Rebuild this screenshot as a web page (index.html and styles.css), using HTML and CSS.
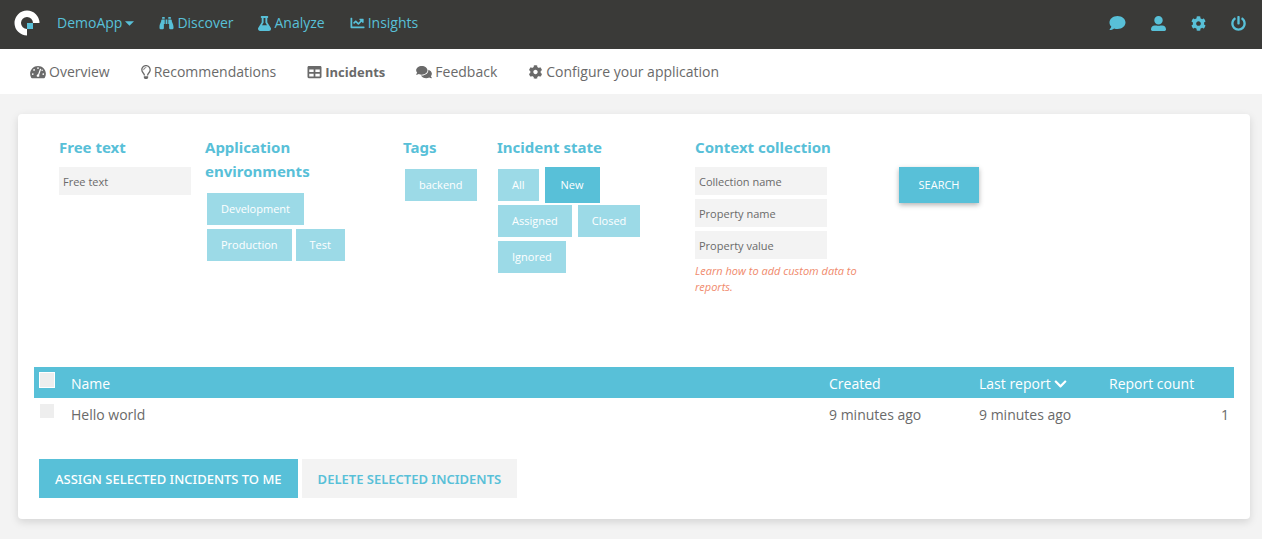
FILE: index.html
```html
<!DOCTYPE html>
<html lang="en">
<head>
<meta charset="utf-8">
<meta name="viewport" content="width=device-width, initial-scale=1">
<title>Incidents - DemoApp</title>
<link rel="stylesheet" href="styles.css">
</head>
<body>
<svg class="sprite" aria-hidden="true">
  <symbol id="cog" viewBox="0 0 512 512"><path d="M487.4 315.7l-42.6-24.6c4.3-23.2 4.3-47 0-70.2l42.6-24.6c4.9-2.8 7.1-8.6 5.5-14-11.1-35.6-30-67.8-54.7-94.6-3.8-4.1-10-5.1-14.8-2.3L380.8 110c-17.9-15.4-38.5-27.3-60.8-35.1V25.8c0-5.6-3.9-10.5-9.4-11.7-36.7-8.2-74.3-7.8-109.2 0-5.5 1.2-9.4 6.1-9.4 11.7V75c-22.2 7.9-42.8 19.8-60.8 35.1L88.7 85.5c-4.9-2.8-11-1.9-14.8 2.3-24.7 26.7-43.6 58.9-54.7 94.6-1.7 5.4.6 11.2 5.5 14L67.3 221c-4.3 23.2-4.3 47 0 70.2l-42.6 24.6c-4.9 2.8-7.1 8.6-5.5 14 11.1 35.6 30 67.8 54.7 94.6 3.8 4.1 10 5.1 14.8 2.3l42.6-24.6c17.9 15.4 38.5 27.3 60.8 35.1v49.2c0 5.6 3.9 10.5 9.4 11.7 36.7 8.2 74.3 7.8 109.2 0 5.5-1.2 9.4-6.1 9.4-11.7v-49.2c22.2-7.9 42.8-19.8 60.8-35.1l42.6 24.6c4.9 2.8 11 1.9 14.8-2.3 24.7-26.7 43.6-58.9 54.7-94.6 1.5-5.5-.7-11.3-5.6-14.1zM256 336c-44.1 0-80-35.9-80-80s35.9-80 80-80 80 35.9 80 80-35.9 80-80 80z"/></symbol>
</svg>
<header class="topbar">
  <a class="logo" href="#" aria-label="Home"><svg viewBox="0 0 26 26" width="26" height="26"><path fill="#fff" d="M13 25.500A12.500 12.500 0 1 1 25.500 13H19A6 6 0 1 0 13 19Z"/><path fill="#58c0d8" d="M13 13h6v6h-6z"/></svg></a>
  <nav class="topnav" aria-label="Main">
    <a href="#">DemoApp<svg class="caret" viewBox="0 0 8 4"><path d="M0 0h8L4 4z"/></svg></a>
    <a href="#"><svg class="icon" viewBox="0 0 512 512"><path d="M416 48c0-8.840-7.160-16-16-16h-64c-8.840 0-16 7.160-16 16v48h96V48zM63.910 159.990C61.400 253.840 3.460 274.220 0 404v44c0 17.670 14.330 32 32 32h96c17.670 0 32-14.330 32-32V288h32V128H95.840c-17.630 0-31.450 14.370-31.930 31.990zm384.180 0c-.48-17.620-14.300-31.990-31.930-31.990H320v160h32v160c0 17.670 14.330 32 32 32h96c17.670 0 32-14.330 32-32v-44c-3.460-129.780-61.400-150.160-63.910-244.010zM176 32h-64c-8.840 0-16 7.160-16 16v48h96V48c0-8.840-7.160-16-16-16zm48 256h64V128h-64v160z"/></svg>Discover</a>
    <a href="#"><svg class="icon tall" viewBox="0 0 448 512"><path d="M437.2 403.5L320 215V64h8c13.3 0 24-10.7 24-24V24c0-13.300-10.700-24-24-24H120c-13.300 0-24 10.700-24 24v16c0 13.300 10.700 24 24 24h8v151L10.800 403.500C-18.500 450.600 15.300 512 70.900 512h306.200c55.700 0 89.400-61.500 60.100-108.500zM137.900 320l48.200-77.600c3.700-5.200 5.800-11.600 5.800-18.400V64h64v160c0 6.900 2.200 13.200 5.800 18.400l48.200 77.600h-172z"/></svg>Analyze</a>
    <a href="#"><svg class="icon" viewBox="0 0 512 512"><path d="M496 384H64V80c0-8.840-7.160-16-16-16H16C7.160 64 0 71.160 0 80v336c0 17.670 14.330 32 32 32h464c8.840 0 16-7.160 16-16v-32c0-8.840-7.160-16-16-16zM464 96H345.940c-21.380 0-32.090 25.850-16.970 40.970l32.400 32.400L288 242.750l-73.370-73.370c-12.500-12.500-32.760-12.500-45.250 0l-68.690 68.690c-6.250 6.250-6.250 16.380 0 22.630l22.620 22.620c6.250 6.250 16.380 6.250 22.630 0L192 237.250l73.370 73.370c12.500 12.500 32.760 12.500 45.250 0l96-96 32.400 32.400c15.120 15.120 40.970 4.410 40.970-16.970V112c.01-8.840-7.150-16-15.990-16z"/></svg>Insights</a>
  </nav>
  <nav class="tools" aria-label="Account">
    <a href="#" aria-label="Messages"><svg viewBox="0 0 512 512" width="17" height="16"><path d="M256 32C114.600 32 0 125.100 0 240c0 49.600 21.400 95 57 130.700C44.500 421.100 2.700 466 2.200 466.500c-2.200 2.300-2.800 5.700-1.500 8.700S4.800 480 8 480c66.300 0 116-31.800 140.600-51.400 32.700 12.300 69 19.400 107.400 19.400 141.400 0 256-93.100 256-208S397.400 32 256 32z"/></svg></a>
    <a href="#" aria-label="Profile"><svg viewBox="0 0 512 512" width="15" height="15"><path d="M256 288c79.500 0 144-64.500 144-144S335.500 0 256 0 112 64.500 112 144s64.500 144 144 144zm128 32h-55.100c-22.200 10.200-46.900 16-72.900 16s-50.600-5.800-72.900-16H128C57.300 320 0 377.300 0 448v16c0 26.500 21.500 48 48 48h416c26.500 0 48-21.500 48-48v-16c0-70.700-57.300-128-128-128z"/></svg></a>
    <a href="#" aria-label="Settings"><svg width="15" height="15"><use href="#cog"/></svg></a>
    <a href="#" aria-label="Log out"><svg viewBox="0 0 512 512" width="15" height="15"><path d="M400 54.100c63 45 104 118.600 104 201.900 0 136.800-110.800 247.700-247.500 248C120 504.300 8.200 393 8 256.400 7.900 173.100 48.900 99.300 111.800 54.200c11.700-8.300 28-4.800 35 7.700L162.600 90c5.900 10.500 3.100 23.800-6.600 31-41.500 30.800-68 79.600-68 134.900-.1 92.300 74.500 168.100 168 168.100 91.600 0 168.600-74.200 168-169.100-.3-51.800-24.700-101.800-68.100-134-9.700-7.200-12.400-20.500-6.500-30.900l15.800-28.100c7-12.400 23.200-16.100 34.800-7.800zM296 264V24c0-13.300-10.700-24-24-24h-32c-13.300 0-24 10.700-24 24v240c0 13.300 10.700 24 24 24h32c13.300 0 24-10.700 24-24z"/></svg></a>
  </nav>
</header>
<nav class="subnav" aria-label="Application">
  <a href="#"><svg class="icon wide" viewBox="0 0 576 512"><path d="M288 32C128.940 32 0 160.940 0 320c0 52.800 14.250 102.260 39.060 144.800 5.610 9.620 16.300 15.200 27.440 15.200h443c11.140 0 21.830-5.580 27.440-15.200C561.750 422.260 576 372.800 576 320c0-159.060-128.940-288-288-288z"/><g fill="#fff"><circle cx="288" cy="112" r="32"/><circle cx="144" cy="180" r="32"/><circle cx="96" cy="330" r="32"/><circle cx="480" cy="330" r="32"/><circle cx="440" cy="190" r="26"/><path d="M362 136l44 14-76 212c14 22 10 52-8 70h-68c-34-42-8-94 36-98z"/></g></svg>Overview</a>
  <a href="#"><svg class="icon bulb" viewBox="0 0 352 512"><path d="M176 80c-52.940 0-96 43.060-96 96 0 8.840 7.160 16 16 16s16-7.160 16-16c0-35.300 28.720-64 64-64 8.840 0 16-7.160 16-16s-7.160-16-16-16zM96.060 459.170c0 3.150.93 6.220 2.680 8.840l24.510 36.840c2.970 4.460 7.970 7.140 13.320 7.140h78.850c5.360 0 10.360-2.680 13.320-7.140l24.510-36.840c1.740-2.620 2.670-5.700 2.680-8.840l.05-43.180H96.020l.04 43.180zM176 0C73.720 0 0 82.970 0 176c0 44.370 16.450 84.850 43.560 115.780 16.640 18.990 42.740 58.800 52.420 92.160v.06h48v-.12c-.01-4.770-.72-9.510-2.150-14.070-5.590-17.810-22.820-64.770-62.170-109.670-20.540-23.430-31.520-53.150-31.610-84.140-.2-73.640 59.670-128 127.950-128 70.580 0 128 57.420 128 128 0 30.970-11.240 60.850-31.650 84.140-39.110 44.610-56.420 91.470-62.100 109.460a47.507 47.507 0 0 0-2.220 14.300v.1h48v-.05c9.680-33.370 35.780-73.180 52.420-92.160C335.550 260.850 352 220.370 352 176 352 78.800 273.200 0 176 0z"/></svg>Recommendations</a>
  <a class="current" href="#" aria-current="page"><svg class="icon" viewBox="0 0 512 512"><path d="M464 32H48C21.490 32 0 53.490 0 80v352c0 26.510 21.490 48 48 48h416c26.510 0 48-21.490 48-48V80c0-26.510-21.490-48-48-48zM224 416H64v-96h160v96zm0-160H64v-96h160v96zm224 160H288v-96h160v96zm0-160H288v-96h160v96z"/></svg>Incidents</a>
  <a href="#"><svg class="icon wide" viewBox="0 0 576 512"><path d="M416 192c0-88.400-93.100-160-208-160S0 103.600 0 192c0 34.300 14.100 65.900 38 92-13.400 30.200-35.500 54.200-35.800 54.500-2.200 2.300-2.800 5.700-1.500 8.700S4.800 352 8 352c36.600 0 66.900-12.300 88.700-25 32.200 15.700 70.300 25 111.300 25 114.900 0 208-71.600 208-160zm122 220c23.900-26 38-57.700 38-92 0-66.900-53.500-124.200-129.300-148.100.9 6.600 1.300 13.300 1.300 20.100 0 105.900-107.700 192-240 192-10.800 0-21.300-.8-31.700-1.900C207.800 439.600 281.800 480 368 480c41 0 79.100-9.200 111.300-25 21.800 12.700 52.100 25 88.700 25 3.200 0 6.100-1.900 7.300-4.800 1.300-2.900.7-6.300-1.500-8.700-.3-.3-22.400-24.200-35.800-54.500z"/></svg>Feedback</a>
  <a href="#"><svg class="icon"><use href="#cog"/></svg>Configure your application</a>
</nav>
<main class="card">
  <form class="filters">
    <div class="filter">
      <label class="title" for="free">Free text</label>
      <input class="field" id="free" type="text" placeholder="Free text">
    </div>
    <div class="filter">
      <h2 class="title">Application environments</h2>
      <div class="tags"><button class="tag" type="button">Development</button><button class="tag" type="button">Production</button><button class="tag" type="button">Test</button></div>
    </div>
    <div class="filter">
      <h2 class="title">Tags</h2>
      <div class="tags"><button class="tag" type="button">backend</button></div>
    </div>
    <div class="filter states">
      <h2 class="title">Incident state</h2>
      <div class="tags"><button class="tag" type="button">All</button><button class="tag selected" type="button" aria-pressed="true">New</button></div>
      <div class="tags spaced"><button class="tag" type="button">Assigned</button><button class="tag" type="button">Closed</button></div>
      <div class="tags"><button class="tag" type="button">Ignored</button></div>
    </div>
    <div class="filter context">
      <h2 class="title">Context collection</h2>
      <div class="fields">
        <input class="field" type="text" placeholder="Collection name" aria-label="Collection name">
        <input class="field" type="text" placeholder="Property name" aria-label="Property name">
        <input class="field" type="text" placeholder="Property value" aria-label="Property value">
      </div>
      <a class="hint" href="#">Learn how to add custom data to reports.</a>
    </div>
    <div class="submit"><button class="search" type="submit">SEARCH</button></div>
  </form>
  <table class="incidents">
    <colgroup><col class="c-check"><col><col class="c-date"><col class="c-last"><col class="c-count"></colgroup>
    <thead><tr>
      <th class="select"><input class="check all" type="checkbox" aria-label="Select all"></th>
      <th>Name</th><th>Created</th>
      <th>Last report <svg class="chevron" viewBox="0 0 448 512"><path d="M207.029 381.476L12.686 187.132c-9.373-9.373-9.373-24.569 0-33.941l22.667-22.667c9.357-9.357 24.522-9.375 33.901-.04L224 284.505l154.745-154.021c9.379-9.335 24.544-9.317 33.901.04l22.667 22.667c9.373 9.373 9.373 24.569 0 33.941L240.971 381.476c-9.373 9.372-24.569 9.372-33.942 0z"/></svg></th>
      <th>Report count</th>
    </tr></thead>
    <tbody><tr>
      <td class="select"><input class="check" type="checkbox" aria-label="Select Hello world"></td>
      <td>Hello world</td><td>9 minutes ago</td><td>9 minutes ago</td><td class="count">1</td>
    </tr></tbody>
  </table>
  <div class="actions">
    <button class="action primary" type="button">ASSIGN SELECTED INCIDENTS TO ME</button>
    <button class="action" type="button">DELETE SELECTED INCIDENTS</button>
  </div>
</main>
</body>
</html>
```
FILE: styles.css
```css
* { box-sizing: border-box; }
body {
  margin: 0;
  background: #f3f3f3;
  color: #6a6a6a;
  font: 14px/20px "Open Sans", "Noto Sans", sans-serif;
}
a { color: inherit; text-decoration: none; }
button, input { font: inherit; border: 0; margin: 0; border-radius: 0; }
svg { fill: currentColor; flex: none; }
.sprite { position: absolute; width: 0; height: 0; }

.topbar {
  display: flex;
  align-items: center;
  background: #3a3a38;
  color: #58c0d8;
  padding: 10px 16px 13px 14px;
}
.logo { display: flex; }
.topnav { display: flex; gap: 25px; margin-left: 17px; }
.topnav a, .subnav a { display: flex; align-items: center; gap: 3px; }
.caret { width: 9px; height: 5px; }
.icon { width: 15px; height: 14px; }
.icon.tall { width: 13px; height: 15px; }
.icon.wide { width: 16px; height: 14px; }
.icon.bulb { width: 10px; height: 14px; }
.tools { display: flex; align-items: center; gap: 25px; margin-left: auto; }
.tools a { display: flex; }

.subnav {
  display: flex;
  gap: 31px;
  background: #fff;
  padding: 13px 30px 12px;
}
.subnav .current { font-weight: 700; font-size: 13px; }

.card {
  margin: 20px 12px 20px 18px;
  padding: 21px 16px;
  background: #fff;
  border-radius: 4px;
  box-shadow: 0 3px 8px rgba(0, 0, 0, .13);
}
.filters {
  display: grid;
  grid-template-columns: 146fr 198fr 94fr 198fr 204fr 335fr;
  padding-left: 25px;
  min-height: 232px;
  align-items: start;
}
.title {
  display: block;
  max-width: 140px;
  margin: 0 0 8px;
  color: #58c0d8;
  font-family: "Noto Sans", "Open Sans", sans-serif;
  font-size: 15px;
  font-weight: 700;
  line-height: 24px;
}
.field {
  display: block;
  width: 132px;
  height: 28px;
  padding: 0 4px;
  background: #f3f3f3;
  color: #6a6a6a;
  font-size: 11px;
}
.field::placeholder { color: #6a6a6a; opacity: 1; }
.fields { display: grid; gap: 4px; }
.tags {
  display: flex;
  flex-wrap: wrap;
  align-items: center;
  gap: 4px;
  padding: 2px;
  max-width: 148px;
}
.tag {
  height: 32px;
  padding: 0 14px;
  background: #9cdae7;
  color: #fff;
  font-size: 11px;
  font-weight: 500;
}
.states .tags { gap: 6px; padding: 0 1px; max-width: none; }
.states .spaced { padding: 2px 1px 4px; }
.tag.selected { height: 36px; padding: 0 16px; background: #58c0d8; }
.hint {
  display: block;
  max-width: 168px;
  margin-top: 4px;
  color: #f08a6c;
  font-size: 11px;
  font-style: italic;
  line-height: 16px;
}
.submit { padding-top: 32px; }
.search {
  width: 80px;
  height: 36px;
  background: #58c0d8;
  color: #fff;
  font-size: 11px;
  font-weight: 500;
  box-shadow: 0 2px 5px rgba(0, 0, 0, .3);
}

.incidents { width: 100%; table-layout: fixed; border-collapse: collapse; }
.c-check { width: 32px; }
.c-date { width: 150px; }
.c-last { width: 130px; }
.c-count { width: 130px; }
th, td { padding: 7px 5px 4px; text-align: left; font-weight: 400; height: 31px; }
th { background: #58c0d8; color: #fff; }
.select { padding: 5px; vertical-align: top; }
.count { text-align: right; }
.check {
  appearance: none;
  display: block;
  width: 14px;
  height: 14px;
  margin: 1px;
  background: #eee;
}
.check.all { width: 16px; height: 16px; margin: 0; border: 1px solid #fff; }
.chevron { width: 13px; height: 14px; vertical-align: -2px; }

.actions { display: flex; flex-wrap: wrap; gap: 4px; padding: 30px 5px 0; }
.action {
  height: 39px;
  padding: 0 16px;
  background: #f3f3f3;
  color: #58c0d8;
  font-family: "Noto Sans", "Open Sans", sans-serif;
  font-size: 13px;
  font-weight: 600;
}
.action.primary { background: #58c0d8; color: #fff; font-weight: 500; }
```
